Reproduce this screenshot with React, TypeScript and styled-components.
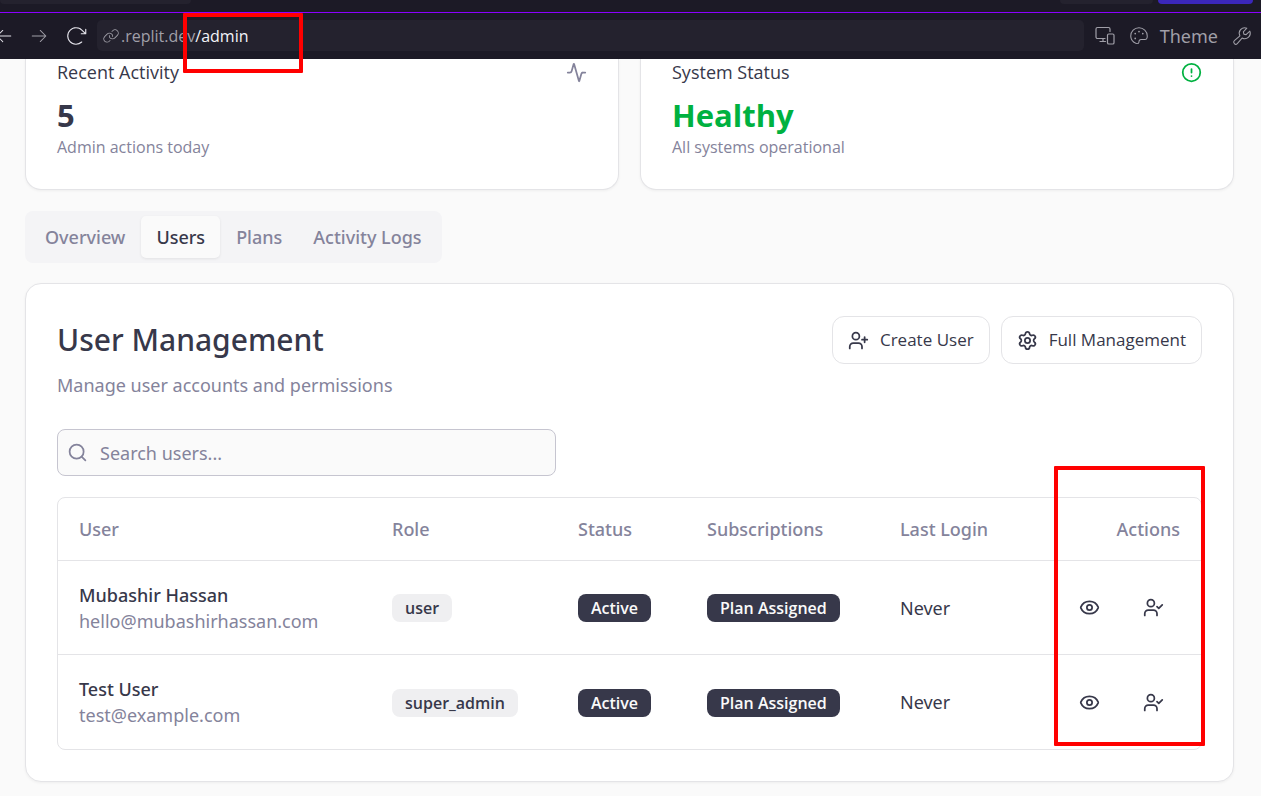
import React from 'react';
import styled, { createGlobalStyle } from 'styled-components';
import { Activity, CircleAlert, Eye, Search, Settings, UserCheck, UserPlus } from 'lucide-react';
import {
  PiArrowClockwiseLight,
  PiArrowLeftLight,
  PiArrowRightLight,
  PiLinkLight,
  PiPaletteLight,
  PiWrenchLight,
} from 'react-icons/pi';

const color = {
  text: '#37384a',
  muted: '#84839b',
  border: '#e4e4e7',
  page: '#fafafa',
  green: '#00b140',
  chrome: '#1c1a26',
  chromeField: '#24222e',
  chromeIcon: '#a09fa8',
  mark: '#ff0000',
};

const narrow = "'Open Sans', sans-serif";

const GlobalStyle = createGlobalStyle`
  *, *::before, *::after { box-sizing: border-box; }
  body {
    margin: 0;
    background: ${color.page};
    color: ${color.text};
    font-family: 'Noto Sans', 'Open Sans', sans-serif;
    font-size: 18px;
    line-height: 26px;
  }
  button, input { font: inherit; color: inherit; }
  button { cursor: pointer; }
  h1, h2, p { margin: 0; }
`;

const Chrome = styled.header`
  padding-bottom: 1px;
  background: ${color.chrome};
`;

const TabStrip = styled.div`
  display: flex;
  gap: 5px;
  height: 12px;
  padding-right: 8px;
  align-items: flex-start;
`;

const StripTab = styled.div<{ $width: number; $active?: boolean; $push?: boolean }>`
  width: ${(p) => p.$width}px;
  height: 4px;
  margin-right: ${(p) => (p.$push ? 'auto' : '0')};
  border-radius: 0 0 5px 5px;
  background: ${(p) => (p.$active ? '#3b27ba' : color.chromeField)};
`;

const Toolbar = styled.div`
  display: flex;
  align-items: center;
  height: 46px;
  padding-right: 8px;
  border-top: 1px solid #8b00ff;
  color: ${color.chromeIcon};
`;

const ToolButton = styled.button<{ $bright?: boolean }>`
  display: flex;
  align-items: center;
  gap: 10px;
  padding: 0;
  border: 0;
  background: none;
  color: ${(p) => (p.$bright ? '#e4e3ea' : color.chromeIcon)};
`;

const NavButtons = styled.nav`
  display: flex;
  align-items: center;
  gap: 15px;
  margin-left: -6px;
  margin-right: 9px;
`;

const AddressBar = styled.div`
  position: relative;
  display: flex;
  flex: 1;
  align-items: center;
  gap: 1px;
  height: 31px;
  padding-left: 5px;
  border-radius: 5px;
  background: ${color.chromeField};
  font-family: ${narrow};
  font-size: 16px;
  line-height: 22px;
`;

const Path = styled.span`
  color: #f4f4f8;
`;

const Tools = styled.div`
  display: flex;
  align-items: center;
  gap: 13px;
  margin-left: 11px;
`;

const Mark = styled.span`
  position: absolute;
  z-index: 2;
  border: 4px solid ${color.mark};
  border-radius: 1px;
  pointer-events: none;
`;

const AddressMark = styled(Mark)`
  left: 86px;
  top: -7px;
  width: 120px;
  height: 60px;
`;

const ActionsMark = styled(Mark)`
  right: -4px;
  top: -32px;
  bottom: 3px;
  width: 151px;
`;

const Page = styled.main`
  display: flex;
  flex-direction: column;
  gap: 20px;
  padding: 0 27px 14px 25px;
`;

const Stats = styled.section`
  display: grid;
  grid-template-columns: 1fr 1fr;
  gap: 21px;
`;

const Card = styled.section`
  border: 1px solid ${color.border};
  border-radius: 16px;
  background: #fff;
  box-shadow: 0 1px 3px rgba(0, 0, 0, 0.05);
  padding: 32px 31px 31px;
`;

const StatCard = styled(Card)`
  padding: 0 31px 31px;
  border-top: 0;
  border-radius: 0 0 16px 16px;
  font-family: ${narrow};
`;

const StatHead = styled.div`
  display: flex;
  align-items: center;
  justify-content: space-between;
`;

const StatValue = styled.p<{ $tone?: string }>`
  margin-top: 9px;
  font-size: 31px;
  font-weight: 700;
  line-height: 42px;
  color: ${(p) => p.$tone ?? color.text};
`;

const StatNote = styled.p`
  font-size: 16px;
  line-height: 22px;
  color: ${color.muted};
`;

const Tabs = styled.div`
  display: flex;
  gap: 1px;
  align-self: flex-start;
  padding: 5px;
  margin-top: 1px;
  border-radius: 8px;
  background: #f4f4f6;
`;

const Tab = styled.button<{ $active?: boolean }>`
  height: 42px;
  padding: 0 15px;
  border: 0;
  border-radius: 5px;
  font-weight: 500;
  color: ${(p) => (p.$active ? color.text : color.muted)};
  background: ${(p) => (p.$active ? color.page : 'transparent')};
  box-shadow: ${(p) => (p.$active ? '0 1px 3px rgba(0, 0, 0, 0.08)' : 'none')};
`;

const CardHead = styled.div`
  display: flex;
  align-items: flex-start;
  justify-content: space-between;
  margin-bottom: 31px;
`;

const Title = styled.h1`
  margin-bottom: 8px;
  font-size: 30px;
  font-weight: 500;
  line-height: 48px;
`;

const Muted = styled.p`
  color: ${color.muted};
`;

const ButtonRow = styled.div`
  display: flex;
  gap: 11px;
`;

const OutlineButton = styled.button`
  display: flex;
  align-items: center;
  gap: 11px;
  height: 48px;
  padding: 0 15px;
  border: 1px solid ${color.border};
  border-radius: 12px;
  background: #fff;
  font-family: ${narrow};
  font-size: 17px;
`;

const SearchBox = styled.label`
  display: flex;
  align-items: center;
  gap: 12px;
  max-width: 499px;
  height: 47px;
  margin-bottom: 21px;
  padding: 0 9px;
  border: 1px solid #c6c5d0;
  border-radius: 8px;
  background: ${color.page};
  color: ${color.muted};
`;

const SearchInput = styled.input`
  flex: 1;
  min-width: 0;
  padding: 0;
  border: 0;
  outline: 0;
  background: none;
  &::placeholder { color: ${color.muted}; opacity: 1; }
`;

const TableFrame = styled.div`
  position: relative;
  border: 1px solid ${color.border};
  border-radius: 8px;
`;

const Table = styled.table`
  width: 100%;
  table-layout: fixed;
  border-collapse: separate;
  border-spacing: 0;
`;

const Col = styled.col<{ $width?: number }>`
  width: ${(p) => (p.$width ? `${p.$width}px` : 'auto')};
`;

const Th = styled.th<{ $right?: boolean }>`
  height: 63px;
  padding: 0 21px;
  border-bottom: 1px solid ${color.border};
  font-weight: 500;
  text-align: ${(p) => (p.$right ? 'right' : 'left')};
  color: ${color.muted};
`;

const Td = styled.td`
  height: 94px;
  padding: 0 21px;
  tbody tr:not(:last-child) & { border-bottom: 1px solid ${color.border}; }
`;

const Name = styled.p`
  font-weight: 500;
`;

const Badge = styled.span<{ $dark?: boolean }>`
  display: inline-block;
  padding: 3px 13px;
  border-radius: 8px;
  font-family: ${narrow};
  font-size: 16px;
  font-weight: 600;
  line-height: 22px;
  vertical-align: middle;
  white-space: nowrap;
  color: ${(p) => (p.$dark ? '#fafafa' : color.text)};
  background: ${(p) => (p.$dark ? color.text : '#efeff1')};
`;

const Actions = styled.div`
  display: flex;
  justify-content: flex-end;
  gap: 11px;
`;

const IconButton = styled.button`
  display: flex;
  align-items: center;
  justify-content: center;
  width: 53px;
  height: 48px;
  padding: 0;
  border: 0;
  background: none;
`;

const users = [
  { name: 'Mubashir Hassan', email: 'hello@mubashirhassan.com', role: 'user' },
  { name: 'Test User', email: 'test@example.com', role: 'super_admin' },
];

const tabs = ['Overview', 'Users', 'Plans', 'Activity Logs'];

const DevicesIcon = () => (
  <svg width="20" height="20" viewBox="0 0 20 20" fill="none" stroke="currentColor" strokeWidth="1.2" strokeLinecap="round" strokeLinejoin="round" aria-hidden="true">
    <path d="M10 12.5H2.5a1.5 1.5 0 0 1-1.5-1.5V3a1.5 1.5 0 0 1 1.5-1.5h11A1.5 1.5 0 0 1 15 3v2.5M8 12.5v3M5 15.5h5.5" />
    <rect x="12.5" y="8" width="6.5" height="10" rx="1.3" />
  </svg>
);

export default function App() {
  return (
    <>
      <GlobalStyle />
      <Chrome>
        <TabStrip>
          <StripTab $width={191} $push />
          <StripTab $width={93} />
          <StripTab $width={95} $active />
        </TabStrip>
        <Toolbar>
          <NavButtons>
            <ToolButton $bright aria-label="Back"><PiArrowLeftLight size={20} /></ToolButton>
            <ToolButton aria-label="Forward"><PiArrowRightLight size={20} /></ToolButton>
            <ToolButton $bright aria-label="Reload"><PiArrowClockwiseLight size={24} /></ToolButton>
          </NavButtons>
          <AddressBar>
            <PiLinkLight size={18} />
            <span>.replit.dev<Path>/admin</Path></span>
            <AddressMark />
          </AddressBar>
          <Tools>
            <ToolButton aria-label="Devices"><DevicesIcon /></ToolButton>
            <ToolButton><PiPaletteLight size={22} />Theme</ToolButton>
            <ToolButton aria-label="Developer tools"><PiWrenchLight size={22} /></ToolButton>
          </Tools>
        </Toolbar>
      </Chrome>
      <Page>
        <Stats>
          <StatCard>
            <StatHead>Recent Activity<Activity size={21} color={color.muted} /></StatHead>
            <StatValue>5</StatValue>
            <StatNote>Admin actions today</StatNote>
          </StatCard>
          <StatCard>
            <StatHead>System Status<CircleAlert size={21} color={color.green} /></StatHead>
            <StatValue $tone={color.green}>Healthy</StatValue>
            <StatNote>All systems operational</StatNote>
          </StatCard>
        </Stats>
        <Tabs role="tablist">
          {tabs.map((t) => (
            <Tab key={t} role="tab" aria-selected={t === 'Users'} $active={t === 'Users'}>{t}</Tab>
          ))}
        </Tabs>
        <Card>
          <CardHead>
            <div>
              <Title>User Management</Title>
              <Muted>Manage user accounts and permissions</Muted>
            </div>
            <ButtonRow>
              <OutlineButton><UserPlus size={21} />Create User</OutlineButton>
              <OutlineButton><Settings size={21} />Full Management</OutlineButton>
            </ButtonRow>
          </CardHead>
          <SearchBox>
            <Search size={21} />
            <SearchInput type="text" placeholder="Search users..." aria-label="Search users" />
          </SearchBox>
          <TableFrame>
            <Table>
              <colgroup>
                <Col $width={313} />
                <Col $width={186} />
                <Col $width={129} />
                <Col $width={193} />
                <Col $width={150} />
                <Col />
              </colgroup>
              <thead>
                <tr>
                  <Th>User</Th>
                  <Th>Role</Th>
                  <Th>Status</Th>
                  <Th>Subscriptions</Th>
                  <Th>Last Login</Th>
                  <Th $right>Actions</Th>
                </tr>
              </thead>
              <tbody>
                {users.map((u) => (
                  <tr key={u.email}>
                    <Td>
                      <Name>{u.name}</Name>
                      <Muted>{u.email}</Muted>
                    </Td>
                    <Td><Badge>{u.role}</Badge></Td>
                    <Td><Badge $dark>Active</Badge></Td>
                    <Td><Badge $dark>Plan Assigned</Badge></Td>
                    <Td>Never</Td>
                    <Td>
                      <Actions>
                        <IconButton aria-label={`View ${u.name}`}><Eye size={21} /></IconButton>
                        <IconButton aria-label={`Approve ${u.name}`}><UserCheck size={21} /></IconButton>
                      </Actions>
                    </Td>
                  </tr>
                ))}
              </tbody>
            </Table>
            <ActionsMark />
          </TableFrame>
        </Card>
      </Page>
    </>
  );
}
